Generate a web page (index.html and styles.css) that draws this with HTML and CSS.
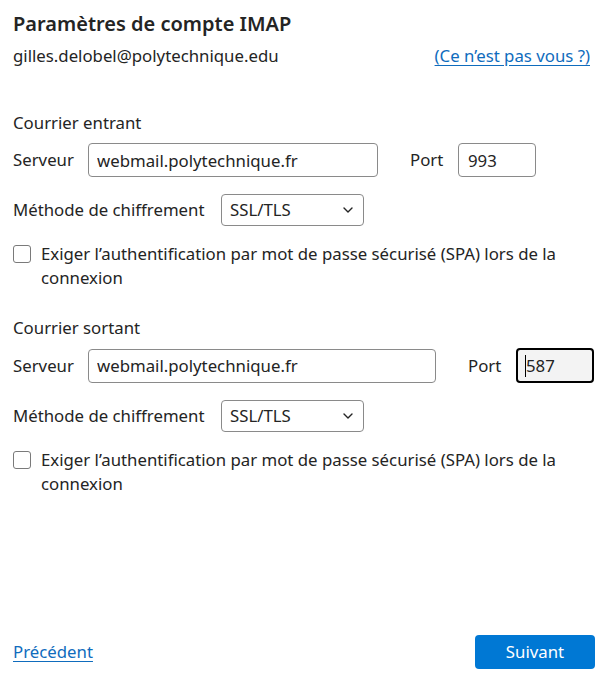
FILE: index.html
```html
<!DOCTYPE html>
<html lang="fr">
<head>
<meta charset="utf-8">
<title>Paramètres de compte IMAP</title>
<link rel="stylesheet" href="styles.css">
</head>
<body>
<div class="page">
  <h1 class="title">Paramètres de compte IMAP</h1>
  <div class="account">
    <span class="email">gilles.delobel@polytechnique.edu</span>
    <a class="link" href="#">(Ce n’est pas vous ?)</a>
  </div>

  <section class="block block-in">
    <div class="section-title">Courrier entrant</div>
    <div class="server-row">
      <label class="label-server">Serveur</label>
      <input class="field field-server" type="text" value="webmail.polytechnique.fr">
      <label class="label-port">Port</label>
      <input class="field field-port" type="text" value="993">
    </div>
    <div class="method-row">
      <label class="label-method">Méthode de chiffrement</label>
      <select class="select"><option>SSL/TLS</option></select>
    </div>
    <label class="check-row">
      <span class="checkbox"></span>
      <span class="check-text">Exiger l’authentification par mot de passe sécurisé (SPA) lors de la connexion</span>
    </label>
  </section>

  <section class="block block-out">
    <div class="section-title">Courrier sortant</div>
    <div class="server-row">
      <label class="label-server">Serveur</label>
      <input class="field field-server wide" type="text" value="webmail.polytechnique.fr">
      <label class="label-port">Port</label>
      <div class="field field-port focused"><span class="caret"></span>587</div>
    </div>
    <div class="method-row">
      <label class="label-method">Méthode de chiffrement</label>
      <select class="select"><option>SSL/TLS</option></select>
    </div>
    <label class="check-row">
      <span class="checkbox"></span>
      <span class="check-text">Exiger l’authentification par mot de passe sécurisé (SPA) lors de la connexion</span>
    </label>
  </section>

  <footer class="footer">
    <a class="link" href="#">Précédent</a>
    <button class="primary" type="button">Suivant</button>
  </footer>
</div>
</body>
</html>
```
FILE: styles.css
```css
* { box-sizing: border-box; }

html, body {
  margin: 0;
  padding: 0;
  background: #ffffff;
}

body {
  font-family: "Noto Sans", "Open Sans", "DejaVu Sans", sans-serif;
  font-size: 16.8px;
  line-height: 24px;
  color: #242424;
}

.page {
  height: 684px;
  padding: 10px 21px 15px 13px;
  display: flex;
  flex-direction: column;
}

.title {
  margin: 0;
  font-size: 20px;
  line-height: 28px;
  font-weight: 600;
  color: #242424;
}

.account {
  margin-top: 6px;
  display: flex;
  justify-content: space-between;
  padding-right: 5px;
}

.link {
  color: #0f6cbd;
  text-decoration: underline;
  text-underline-offset: 3px;
}

.block-in { margin-top: 43px; }
.block-out { margin-top: 26px; }

.section-title {
  height: 24px;
}

.server-row {
  margin-top: 8px;
  display: flex;
  align-items: center;
}

.label-server { width: 75px; }
.label-port { margin-left: 32px; width: 48px; }

.field {
  font: inherit;
  color: #242424;
  height: 34px;
  border: 1px solid #8a8a8a;
  border-radius: 4px;
  padding: 0 8px;
  background: #ffffff;
  outline: none;
}

.field-server { width: 290px; }
.field-server.wide { width: 348px; }
.field-port { width: 78px; padding-left: 9px; }

.focused {
  position: relative;
  display: flex;
  align-items: center;
  border: 2px solid #000000;
  background: #f3f3f3;
  padding-left: 8px;
  height: 35px;
}

.caret {
  position: absolute;
  left: 7px;
  top: 5px;
  width: 1px;
  height: 22px;
  background: #000000;
}

.method-row {
  margin-top: 17px;
  display: flex;
  align-items: center;
}

.label-method { width: 208px; }

.select {
  font: inherit;
  color: #242424;
  width: 143px;
  height: 32px;
  border: 1px solid #8a8a8a;
  border-radius: 4px;
  padding: 0 8px;
  background: #ffffff url("data:image/svg+xml,%3Csvg xmlns='http://www.w3.org/2000/svg' width='10' height='6' viewBox='0 0 10 6'%3E%3Cpath d='M1 1l4 4 4-4' fill='none' stroke='%23242424' stroke-width='1.4' stroke-linecap='round' stroke-linejoin='round'/%3E%3C/svg%3E") no-repeat right 10px center;
  -webkit-appearance: none;
  appearance: none;
}

.check-row {
  margin-top: 16px;
  display: flex;
  align-items: flex-start;
  gap: 10px;
}

.checkbox {
  flex: none;
  width: 18px;
  height: 18px;
  margin-top: 3px;
  border: 1px solid #7a7a7a;
  border-radius: 3px;
  background: #ffffff;
}

.check-text { padding-right: 20px; }

.footer {
  margin-top: auto;
  display: flex;
  justify-content: space-between;
  align-items: center;
}

.primary {
  font: inherit;
  color: #ffffff;
  background: #0078d4;
  border: none;
  border-radius: 4px;
  width: 120px;
  height: 34px;
}
```
